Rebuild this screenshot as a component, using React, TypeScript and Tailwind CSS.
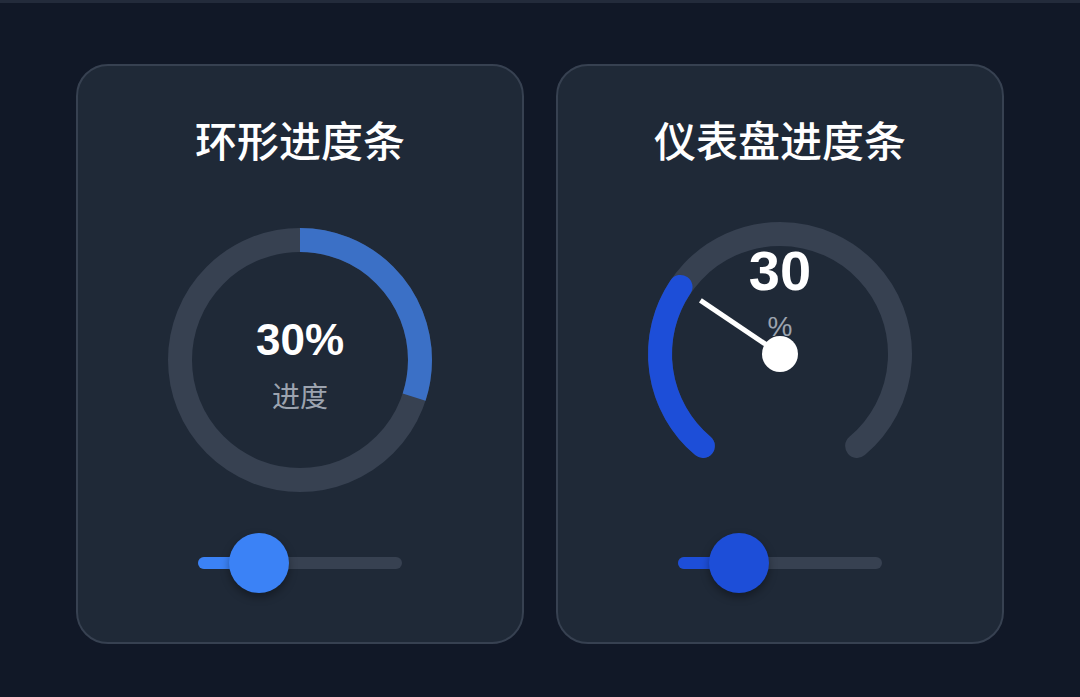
const sans = "font-['Liberation_Sans','Noto_Sans_CJK_SC',sans-serif]";

const R = 120;
const CIRC = 2 * Math.PI * R;

function polar(cx: number, cy: number, deg: number) {
  const a = (deg * Math.PI) / 180;
  return [cx + R * Math.cos(a), cy + R * Math.sin(a)];
}

function Slider({ value, color }: { value: number; color: string }) {
  return (
    <div className="relative mt-[41px] flex h-[60px] w-[204px] items-center">
      <div className="relative h-3 w-full rounded-full bg-[#374151]">
        <div className={`absolute left-0 top-0 h-full rounded-full ${color}`} style={{ width: `${value}%` }} />
      </div>
      <div
        className={`absolute top-0 h-[60px] w-[60px] rounded-full shadow-[0_4px_8px_rgba(0,0,0,0.35)] ${color}`}
        style={{ left: `calc(${value}% - 30px)` }}
      />
    </div>
  );
}

function RingCard({ value }: { value: number }) {
  return (
    <div className="flex h-[580px] w-[448px] flex-col items-center rounded-[32px] border-2 border-[#374151] bg-[#1f2937] pt-[56px]">
      <h2 className="text-[42px] font-medium leading-none text-white">环形进度条</h2>
      <div className="relative mt-[64px] h-[264px] w-[264px]">
        <svg width="264" height="264" viewBox="0 0 264 264" className="absolute inset-0">
          <circle cx="132" cy="132" r={R} fill="none" stroke="#374151" strokeWidth="24" />
          <circle
            cx="132"
            cy="132"
            r={R}
            fill="none"
            stroke="#3b70c6"
            strokeWidth="24"
            strokeDasharray={CIRC}
            strokeDashoffset={CIRC * (1 - value / 100)}
            transform="rotate(-90 132 132)"
          />
        </svg>
        <div className="absolute inset-x-0 top-[90px] flex flex-col items-center">
          <span className="text-[44px] font-bold leading-none text-white">{value}%</span>
          <span className="mt-[22px] text-[28px] leading-none text-[#9ca3af]">进度</span>
        </div>
      </div>
      <Slider value={value} color="bg-[#3b82f6]" />
    </div>
  );
}

function GaugeCard({ value }: { value: number }) {
  const cx = 132;
  const cy = 126;
  const start = 130;
  const span = 280;
  const end = start + (span * value) / 100;
  const [sx, sy] = polar(cx, cy, start);
  const [ex, ey] = polar(cx, cy, start + span);
  const [px, py] = polar(cx, cy, end);
  const a = (end * Math.PI) / 180;
  const nx = cx + 96 * Math.cos(a);
  const ny = cy + 96 * Math.sin(a);

  return (
    <div className="flex h-[580px] w-[448px] flex-col items-center rounded-[32px] border-2 border-[#374151] bg-[#1f2937] pt-[56px]">
      <h2 className="text-[42px] font-medium leading-none text-white">仪表盘进度条</h2>
      <div className="relative mt-[64px] h-[264px] w-[264px]">
        <svg width="264" height="264" viewBox="0 0 264 264" className="absolute inset-0 overflow-visible">
          <path
            d={`M ${sx} ${sy} A ${R} ${R} 0 1 1 ${ex} ${ey}`}
            fill="none"
            stroke="#374151"
            strokeWidth="24"
            strokeLinecap="round"
          />
          <path
            d={`M ${sx} ${sy} A ${R} ${R} 0 0 1 ${px} ${py}`}
            fill="none"
            stroke="#1d4ed8"
            strokeWidth="24"
            strokeLinecap="round"
          />
        </svg>
        <div className="absolute inset-x-0 top-[15px] flex flex-col items-center">
          <span className="text-[56px] font-bold leading-none text-white">{value}</span>
          <span className="mt-[14px] text-[28px] leading-none text-[#9ca3af]">%</span>
        </div>
        <svg width="264" height="264" viewBox="0 0 264 264" className="absolute inset-0 overflow-visible">
          <line x1={cx} y1={cy} x2={nx} y2={ny} stroke="white" strokeWidth="5" />
          <circle cx={cx} cy={cy} r="18" fill="white" />
        </svg>
      </div>
      <Slider value={value} color="bg-[#1d4ed8]" />
    </div>
  );
}

export default function App() {
  return (
    <div className={`min-h-screen border-t-[3px] border-[#232b3b] bg-[#111827] pt-[61px] ${sans}`}>
      <div className="flex justify-center gap-8">
        <RingCard value={30} />
        <GaugeCard value={30} />
      </div>
    </div>
  );
}
